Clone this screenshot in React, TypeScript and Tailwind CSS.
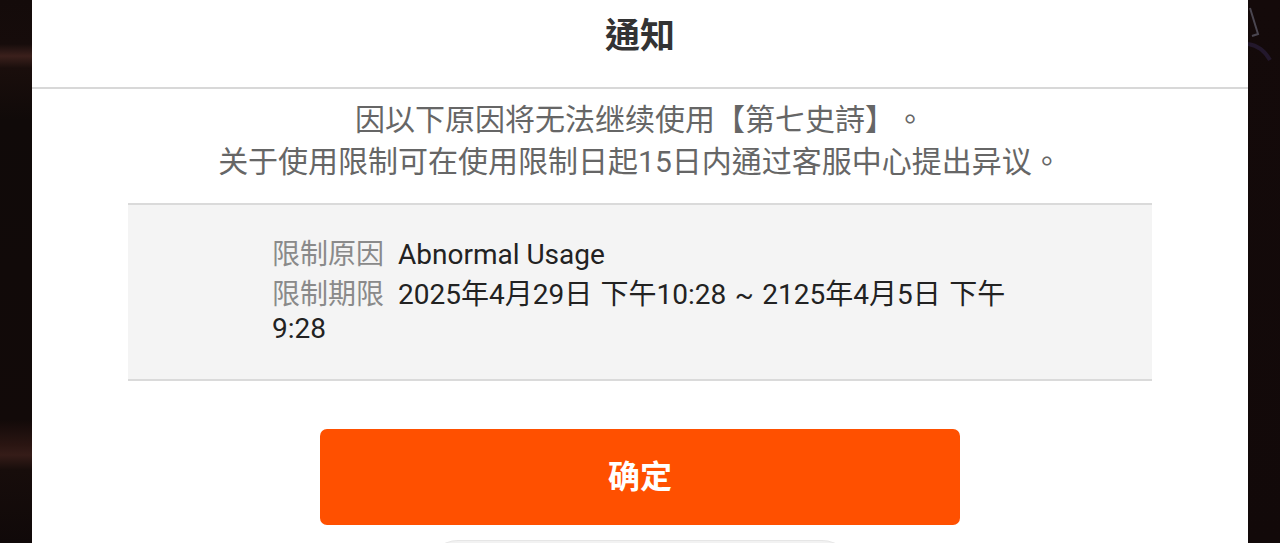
import React from "react";

export default function App() {
  const font = {
    fontFamily: 'Roboto, "Noto Sans CJK TC", "Noto Sans CJK SC", sans-serif',
  };
  return (
    <div
      className="flex h-[543px] w-full overflow-hidden bg-[#120a09] [text-spacing-trim:space-all]"
      style={font}
    >
      <div className="w-[32px] shrink-0 bg-[linear-gradient(180deg,#140b0a_0px,#160c0b_44px,#3b201c_56px,#1a0e0c_68px,#100a09_120px,#120a09_420px,#2a1512_445px,#351c18_455px,#170d0b_470px,#100909_543px)]" />
      <div className="flex flex-1 flex-col bg-white">
        <div className="flex h-[89px] shrink-0 justify-center border-b-2 border-[#d8d8d8] pt-[17px]">
          <span className="text-[35px] font-bold leading-[40px] text-[#333333]">
            通知
          </span>
        </div>
        <div className="pt-[10px] text-center text-[30px] leading-[42px] text-[#666666] [text-spacing-trim:space-all]">
          <p>因以下原因将无法继续使用【第七史詩】。</p>
          <p>关于使用限制可在使用限制日起15日内通过客服中心提出异议。</p>
        </div>
        <div className="mx-[96px] mt-[20px] border-y-2 border-[#dadada] bg-[#f4f4f4] px-[144px] pt-[33px] pb-[33px] text-[28px] leading-[34px]">
          <p>
            <span className="mr-[14px] text-[#8a8a8a]">限制原因</span>
            <span className="text-[#222222]">Abnormal Usage</span>
          </p>
          <p className="mt-[6px]">
            <span className="mr-[14px] text-[#8a8a8a]">限制期限</span>
            <span className="text-[#222222] [word-spacing:1.5px]">
              2025年4月29日 下午10:28 ~ 2125年4月5日 下午 9:28
            </span>
          </p>
        </div>
        <button className="mx-auto mt-[48px] flex h-[96px] w-[640px] shrink-0 items-center justify-center rounded-[7px] bg-[#ff5000]">
          <span className="text-[32px] font-bold text-white">确定</span>
        </button>
        <div className="mx-auto mt-[15px] h-[60px] w-[424px] shrink-0 rounded-t-[30px] border-t border-[#e6e6e6] bg-[#f2f2f2]" />
      </div>
      <div className="relative w-[32px] shrink-0 bg-[linear-gradient(180deg,#140a0a_0px,#120909_543px)]">
        <svg
          className="absolute left-0 top-0"
          width="32"
          height="80"
          viewBox="0 0 32 80"
        >
          <path
            d="M2 8 L10 34 L4 36"
            stroke="#4a4650"
            strokeWidth="2"
            fill="none"
          />
          <path
            d="M0 44 Q14 46 22 60"
            stroke="#2a1e3a"
            strokeWidth="4"
            fill="none"
            opacity="0.7"
          />
        </svg>
      </div>
    </div>
  );
}
